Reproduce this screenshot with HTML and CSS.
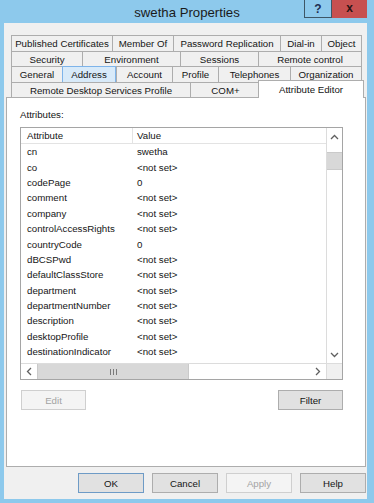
FILE: index.html
```html
<!DOCTYPE html>
<html lang="en">
  <head>
    <meta charset="UTF-8" />
    <title>swetha Properties</title>
    <link rel="stylesheet" href="styles.css">
  </head>
  <body>
    <div class="window">
      <div class="titlebar">
        <span></span>
        <span class="title">swetha Properties</span>
        <div class="caption">
          <span class="cap-btn help">?</span>
          <span class="cap-btn close">x</span>
        </div>
      </div>

      <div class="client">
        <div class="tabs">
          <div class="tab-row row1">
            <span class="tab">Published Certificates</span>
            <span class="tab">Member Of</span>
            <span class="tab">Password Replication</span>
            <span class="tab">Dial-in</span>
            <span class="tab">Object</span>
          </div>
          <div class="tab-row row2">
            <span class="tab">Security</span>
            <span class="tab">Environment</span>
            <span class="tab">Sessions</span>
            <span class="tab">Remote control</span>
          </div>
          <div class="tab-row row3">
            <span class="tab">General</span>
            <span class="tab hot">Address</span>
            <span class="tab">Account</span>
            <span class="tab">Profile</span>
            <span class="tab">Telephones</span>
            <span class="tab">Organization</span>
          </div>
          <div class="tab-row row4">
            <span class="tab">Remote Desktop Services Profile</span>
            <span class="tab">COM+</span>
            <span class="tab selected">Attribute Editor</span>
          </div>
        </div>

        <div class="panel">
          <div class="label">Attributes:</div>
          <div class="listbox">
            <div class="list-body">
              <div class="list-row list-head">
                <span class="col-name">Attribute</span>
                <span class="col-value">Value</span>
              </div>
              <div class="list-row"><span class="col-name">cn</span><span class="col-value">swetha</span></div>
              <div class="list-row"><span class="col-name">co</span><span class="col-value">&lt;not set&gt;</span></div>
              <div class="list-row"><span class="col-name">codePage</span><span class="col-value">0</span></div>
              <div class="list-row"><span class="col-name">comment</span><span class="col-value">&lt;not set&gt;</span></div>
              <div class="list-row"><span class="col-name">company</span><span class="col-value">&lt;not set&gt;</span></div>
              <div class="list-row"><span class="col-name">controlAccessRights</span><span class="col-value">&lt;not set&gt;</span></div>
              <div class="list-row"><span class="col-name">countryCode</span><span class="col-value">0</span></div>
              <div class="list-row"><span class="col-name">dBCSPwd</span><span class="col-value">&lt;not set&gt;</span></div>
              <div class="list-row"><span class="col-name">defaultClassStore</span><span class="col-value">&lt;not set&gt;</span></div>
              <div class="list-row"><span class="col-name">department</span><span class="col-value">&lt;not set&gt;</span></div>
              <div class="list-row"><span class="col-name">departmentNumber</span><span class="col-value">&lt;not set&gt;</span></div>
              <div class="list-row"><span class="col-name">description</span><span class="col-value">&lt;not set&gt;</span></div>
              <div class="list-row"><span class="col-name">desktopProfile</span><span class="col-value">&lt;not set&gt;</span></div>
              <div class="list-row"><span class="col-name">destinationIndicator</span><span class="col-value">&lt;not set&gt;</span></div>
            </div>

            <div class="vscroll">
              <span class="arrow">
                <svg width="9" height="6" viewBox="0 0 9 6"><polyline points="1,5 4.5,1.5 8,5" fill="none" stroke="#606060" stroke-width="1.3"/></svg>
              </span>
              <span class="vthumb"></span>
              <span class="track"></span>
              <span class="arrow">
                <svg width="9" height="6" viewBox="0 0 9 6"><polyline points="1,1 4.5,4.5 8,1" fill="none" stroke="#606060" stroke-width="1.3"/></svg>
              </span>
            </div>

            <div class="hscroll">
              <span class="arrow">
                <svg width="6" height="9" viewBox="0 0 6 9"><polyline points="5,1 1.5,4.5 5,8" fill="none" stroke="#606060" stroke-width="1.3"/></svg>
              </span>
              <span class="hthumb"><i></i><i></i><i></i></span>
              <span class="track"></span>
              <span class="arrow">
                <svg width="6" height="9" viewBox="0 0 6 9"><polyline points="1,1 4.5,4.5 1,8" fill="none" stroke="#606060" stroke-width="1.3"/></svg>
              </span>
            </div>

            <div class="corner"></div>
          </div>

          <div class="panel-buttons">
            <button class="btn disabled">Edit</button>
            <button class="btn">Filter</button>
          </div>
        </div>

        <div class="footer">
          <button class="btn default">OK</button>
          <button class="btn">Cancel</button>
          <button class="btn disabled">Apply</button>
          <button class="btn">Help</button>
        </div>
      </div>
    </div>
  </body>
</html>
```

FILE: styles.css
```css
body {
  margin: 0;
  font-family: "Liberation Sans", Arial, sans-serif;
  font-size: 9.7px;
  color: #151515;
}
.window {
  width: 374px;
  height: 503px;
  background: #8dc9ec;
  display: flex;
  flex-direction: column;
  overflow: hidden;
}
.titlebar {
  height: 23px;
  display: grid;
  grid-template-columns: 1fr auto 1fr;
  align-items: center;
}
.title {
  font-size: 13.2px;
  color: #1a1a1a;
  padding-top: 1px;
}
.caption {
  justify-self: end;
  align-self: start;
  display: flex;
  margin-right: 7px;
}
.cap-btn {
  height: 18px;
  display: flex;
  align-items: center;
  justify-content: center;
  font-weight: bold;
  box-sizing: border-box;
}
.help {
  width: 28px;
  border: 1px solid #3e5666;
  border-top: none;
  color: #1d2e52;
  font-size: 12px;
}
.close {
  width: 35px;
  background: #c75050;
  color: #2a1414;
  font-size: 12px;
  padding-bottom: 2px;
}

.client {
  flex: 1;
  margin: 0 7px 4px 4px;
  background: #f0f0f0;
  padding: 12px 1px 6px 2px;
  display: flex;
  flex-direction: column;
}
.tabs {
  margin: 0 4px 0 5px;
}
.tab-row {
  display: grid;
  height: 16px;
}
.row2,
.row4 {
  height: 15px;
}
.row1 {
  grid-template-columns: 101px 61px 107px 41px 1fr;
}
.row2 {
  grid-template-columns: 71px 98px 78px 1fr;
}
.row3 {
  grid-template-columns: 51px 54px 56px 46px 72px 1fr;
}
.row4 {
  grid-template-columns: 179px 70px 1fr;
}
.tab {
  background: #f0f0f0;
  border-top: 1px solid #adadad;
  border-left: 1px solid #adadad;
  display: flex;
  align-items: center;
  justify-content: center;
  white-space: nowrap;
  box-sizing: border-box;
}
.tab:last-child {
  border-right: 1px solid #adadad;
}
.tab.hot {
  background: #d8eaf9;
  border: 1px solid #7eb4ea;
  border-bottom: none;
}
.tab.selected {
  background: #fff;
  margin: -2px -2px -1px -2px;
  position: relative;
  border-right: 1px solid #adadad;
  padding-bottom: 1px;
}

.panel {
  height: 370px;
  box-sizing: border-box;
  background: #fff;
  border: 1px solid #adadad;
  padding: 11px 22px 0 13px;
}
.label {
  line-height: 12px;
}
.listbox {
  margin-top: 6px;
  width: 323px;
  height: 253px;
  box-sizing: border-box;
  border: 1px solid #a5a5a5;
  display: grid;
  grid-template-columns: 1fr 16px;
  grid-template-rows: 1fr 16px;
}
.list-body {
  overflow: hidden;
}
.list-row {
  display: flex;
  height: 15.4px;
  align-items: center;
}
.list-head {
  height: 16px;
  box-sizing: border-box;
  border-bottom: 1px solid #e3e3e3;
}
.col-name {
  width: 106px;
  padding-left: 6px;
  flex-shrink: 0;
}
.list-head .col-name {
  height: 15px;
  display: flex;
  align-items: center;
  border-right: 1px solid #e3e3e3;
  width: 105px;
}
.col-value {
  padding-left: 4px;
}

.vscroll {
  border-left: 1px solid #dcdcdc;
  display: flex;
  flex-direction: column;
}
.vscroll .arrow {
  height: 17px;
  display: flex;
  align-items: center;
  justify-content: center;
}
.vscroll .vthumb {
  height: 16px;
  margin: 7px 0 0;
  background: #d8d8d8;
  border-top: 1px solid #cacaca;
  border-bottom: 1px solid #cacaca;
}
.track {
  flex: 1;
}
.hscroll {
  border-top: 1px solid #dcdcdc;
  display: flex;
}
.hscroll .arrow {
  width: 16px;
  display: flex;
  align-items: center;
  justify-content: center;
}
.hthumb {
  width: 150px;
  background: #d8d8d8;
  border-left: 1px solid #cacaca;
  border-right: 1px solid #cacaca;
  display: flex;
  align-items: center;
  justify-content: center;
  gap: 2px;
}
.hthumb i {
  width: 1px;
  height: 6px;
  background: #7a7a7a;
}
.corner {
  background: #f0f0f0;
  border-left: 1px solid #dcdcdc;
  border-top: 1px solid #dcdcdc;
}

.btn {
  font-family: inherit;
  font-size: 9.7px;
  height: 20px;
  width: 66px;
  padding: 0;
  background: #e1e1e1;
  border: 1px solid #adadad;
  color: #151515;
}
.btn.disabled {
  background: #f4f4f4;
  border-color: #cfcfcf;
  color: #a3a3a3;
}
.btn.default {
  border-color: #6e9bc6;
}
.panel-buttons {
  display: flex;
  justify-content: space-between;
  margin-top: 10px;
  width: 323px;
  padding-left: 1px;
  box-sizing: border-box;
}
.panel-buttons .btn {
  width: 65px;
}
.footer {
  margin-top: 6px;
  display: flex;
  justify-content: flex-end;
  gap: 8px;
}
```
